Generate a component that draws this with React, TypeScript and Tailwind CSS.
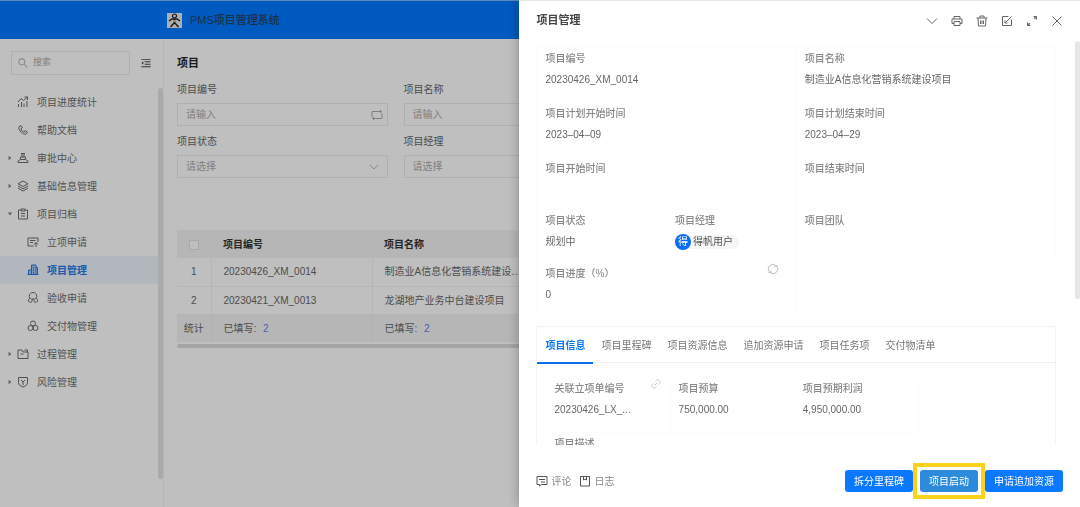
import type { ReactNode } from "react";
import { AiOutlineMenuFold, AiOutlinePhone, AiOutlineSearch } from "react-icons/ai";

const shapes: Record<string, ReactNode> = {
  chart: <path d="M3 22v-6M9 22V12M14 22v-7M20 22V10M2 12l6-7 5 4 8-7M15 2h6v6" />,
  flask: <path d="M8 3h8M10 3v7M14 3v7M7 10h10v5H7zM7 15l-5 3v3h20v-3l-5-3" />,
  layers: <path d="m12 2 10 5.500L12 13 2 7.500zM2 12l10 5.500L22 12M2 16.500 12 22l10-5.500" />,
  clipboard: <path d="M8 4H3v18h18V4h-5M8 2h8v4H8zM8 11h8M8 16h8" />,
  form: <path d="M13 20H2V4h20v8M6 9h11M6 13h6M18 13v9M14 17l4-4 4 4" />,
  building: (
    <>
      <path d="M3 12h6v9H3zM9 2h9v19H9z" fill="currentColor" fillOpacity="0.35" />
      <path d="M1 21h22M18 7h3v14M13 6v3M13 11v3M13 16v3" />
    </>
  ),
  badge: <path d="M7 14a7.500 7.500 0 1 1 10 0M8 13a4 4 0 1 0 2 6v-6M16 13a4 4 0 1 1-2 6v-6M10 14h4" />,
  circles: (
    <>
      <circle cx="12" cy="7" r="5" />
      <circle cx="7" cy="16" r="5" />
      <circle cx="17" cy="16" r="5" />
    </>
  ),
  folder: <path d="M2 4h8l2 4h10v13H2zM7 12h6M15 4h6v4" />,
  shield: <path d="M3 3h18v10c0 5-4 7-9 9-5-2-9-4-9-9zM8 8l4 4 4-4M12 12v6" />,
  loop: <path d="M2 16V5h19M22 8v11H3M18 2l3 3-3 3M6 22l-3-3 3-3" />,
  down: <path d="m2 7 10 10L22 7" />,
  close: <path d="m3 3 18 18M21 3 3 21" />,
  print: <path d="M6 8V3h12v5M6 17H2V8h20v9h-4M6 13h12v8H6z" />,
  trash: <path d="M1 6h22M8 6V2h8v4M4 6l1 16h14l1-16M9 11v7M12 11v7M15 11v7" />,
  edit: <path d="M15 3H3v18h18V9M21 3 9 15M8 11v5h5" />,
  expand: <path d="M15 3h6v6M21 3l-5 5M17 5h2v2M9 21H3v-6M3 21l5-5M5 17v2h2" />,
  refresh: <path d="M5 18A9 9 0 0 1 16 4M19 6a9 9 0 0 1-11 14M3 19h5v-4M21 5h-5v4" />,
  link: <path d="m9 15 6-6M11 7l3-3a4.500 4.500 0 0 1 6 6l-3 3M13 17l-3 3a4.500 4.500 0 0 1-6-6l3-3" />,
  comment: <path d="M2 3h20v16H11l-4 3v-3H2zM6 9h12M10 14h8" />,
  log: <path d="M3 3h18v19H3zM9 3v7l3-2 3 2V3" />,
};

function Icon({ name, className = "size-3" }: { name: string; className?: string }) {
  return (
    <svg
      viewBox="0 0 24 24"
      fill="none"
      stroke="currentColor"
      strokeWidth="2"
      className={`shrink-0 ${className}`}
      aria-hidden="true"
    >
      {shapes[name]}
    </svg>
  );
}

const MENU = [
  { label: "项目进度统计", icon: <Icon name="chart" /> },
  { label: "帮助文档", icon: <AiOutlinePhone className="size-3 -scale-x-100" /> },
  { label: "审批中心", icon: <Icon name="flask" />, arrow: "right" },
  { label: "基础信息管理", icon: <Icon name="layers" />, arrow: "right" },
  { label: "项目归档", icon: <Icon name="clipboard" />, arrow: "down" },
  { label: "立项申请", icon: <Icon name="form" />, child: true },
  { label: "项目管理", icon: <Icon name="building" />, child: true, active: true },
  { label: "验收申请", icon: <Icon name="badge" />, child: true },
  { label: "交付物管理", icon: <Icon name="circles" />, child: true },
  { label: "过程管理", icon: <Icon name="folder" />, arrow: "right" },
  { label: "风险管理", icon: <Icon name="shield" />, arrow: "right" },
];

const ROWS = [
  { code: "20230426_XM_0014", name: "制造业A信息化营销系统建设项目" },
  { code: "20230421_XM_0013", name: "龙湖地产业务中台建设项目" },
];

const TABS = ["项目信息", "项目里程碑", "项目资源信息", "追加资源申请", "项目任务项", "交付物清单"];

function Sidebar() {
  return (
    <aside className="flex w-[164px] shrink-0 flex-col border-r border-[#f4f4f4] pt-3">
      <div className="flex items-center justify-between px-[11px]">
        <label className="flex h-6 w-[119px] items-center gap-1 border border-[#ebebeb] px-[5px] text-[#aaa]">
          <AiOutlineSearch className="size-3 shrink-0" />
          <input
            aria-label="搜索"
            placeholder="搜索"
            className="w-full min-w-0 text-[9px] outline-none placeholder:text-[#aaa]"
          />
        </label>
        <button type="button" aria-label="收起菜单" className="text-[#444]">
          <AiOutlineMenuFold className="size-3" />
        </button>
      </div>
      <div className="mt-[13px] flex min-h-0 flex-1">
        <nav className="min-w-0 flex-1">
          {MENU.map((item) => (
            <a
              key={item.label}
              href="#"
              className={`flex h-7 items-center ${item.child ? "pl-[27px]" : "pl-[7px]"} ${
                item.active ? "bg-[#edf4fd] font-bold text-[#2477e8]" : "text-[#6c6c6c]"
              }`}
            >
              {!item.child && (
                <span className="flex w-[10px]">
                  {item.arrow && (
                    <svg viewBox="0 0 8 8" className="size-[6px] fill-[#888]" aria-hidden="true">
                      <path d={item.arrow === "right" ? "M2 1v6l4-3z" : "M1 2h6L4 6z"} />
                    </svg>
                  )}
                </span>
              )}
              {item.icon}
              <span className="ml-2">{item.label}</span>
            </a>
          ))}
        </nav>
        <div className="mb-7 w-[5px] rounded-full bg-[#e3e3e3]" />
      </div>
    </aside>
  );
}

function Filter({ id, label, select, icon }: { id: string; label: string; select?: boolean; icon?: ReactNode }) {
  return (
    <div>
      <label htmlFor={id} className="block h-4 leading-4 text-[#666]">
        {label}
      </label>
      <div className="mt-[5px] flex h-[23px] items-center border border-[#ebebeb] pr-1 pl-2 text-[#aaa]">
        {select ? (
          <select id={id} className="w-full min-w-0 appearance-none outline-none">
            <option>请选择</option>
          </select>
        ) : (
          <input
            id={id}
            placeholder="请输入"
            className="w-full min-w-0 outline-none placeholder:text-[#aaa]"
          />
        )}
        {icon}
      </div>
    </div>
  );
}

function ProjectList() {
  return (
    <main className="min-w-0 flex-1 px-[13px] pt-4">
      <h2 className="text-[11px] leading-4 font-bold text-[#222]">项目</h2>
      <div className="mt-[11px] grid grid-cols-4 gap-x-4 gap-y-2">
        <Filter id="code" label="项目编号" icon={<Icon name="loop" />} />
        <Filter id="name" label="项目名称" />
        <div className="col-span-2" />
        <Filter id="status" label="项目状态" select icon={<Icon name="down" className="mr-1 size-[10px]" />} />
        <Filter id="manager" label="项目经理" select />
      </div>
      <table className="mt-[52px] w-full table-fixed text-left text-[#666]">
        <thead>
          <tr className="h-7 bg-[#f3f3f3] text-[#333]">
            <th className="w-[34px] text-center">
              <input
                type="checkbox"
                aria-label="全选"
                className="size-[10px] appearance-none border border-[#e2e2e2] bg-white align-middle"
              />
            </th>
            <th className="w-[161px] px-3">项目编号</th>
            <th className="w-[161px] px-3">项目名称</th>
            <th />
          </tr>
        </thead>
        <tbody>
          {ROWS.map((row, i) => (
            <tr key={row.code} className="h-7 border-b border-[#f2f2f2]">
              <td className="border-r border-[#f2f2f2] text-center">{i + 1}</td>
              <td className="border-r border-[#f2f2f2] px-3">{row.code}</td>
              <td className="truncate pr-2 pl-3">{row.name}</td>
              <td />
            </tr>
          ))}
        </tbody>
        <tfoot>
          <tr className="h-7 bg-[#f3f3f3]">
            <td className="border-r border-[#eee] text-center">统计</td>
            <td className="border-r border-[#eee] px-3">
              已填写: <span className="ml-1 text-[#5b83ee]">2</span>
            </td>
            <td className="px-3">
              已填写: <span className="ml-1 text-[#5b83ee]">2</span>
            </td>
            <td />
          </tr>
        </tfoot>
      </table>
      <div className="mt-[2px] h-1 rounded-full bg-[#dcdcdc]" />
    </main>
  );
}

function Field({
  label,
  children,
  className = "",
  icon,
}: {
  label: string;
  children?: ReactNode;
  className?: string;
  icon?: ReactNode;
}) {
  return (
    <div className={`flex justify-between border-r border-b border-[#fcfcfc] px-2 pt-[3px] ${className}`}>
      <dl className="min-w-0">
        <dt className="h-4 leading-4 font-medium text-[#888]">{label}</dt>
        <dd className="mt-[5px] h-4 truncate leading-4 text-[#666]">{children}</dd>
      </dl>
      {icon}
    </div>
  );
}

function Drawer() {
  return (
    <section className="fixed inset-y-0 right-0 flex w-[51.9%] flex-col bg-white shadow-[0_0_12px_rgba(0,0,0,0.3)]">
      <header className="flex h-10 shrink-0 items-center justify-between border-t border-[#e8e8e8] px-[17px]">
        <h1 className="text-[11px] font-bold text-[#444]">项目管理</h1>
        <div className="flex items-center gap-[13px] text-[#666]">
          <button type="button" aria-label="下一条">
            <Icon name="down" />
          </button>
          <button type="button" aria-label="打印">
            <Icon name="print" />
          </button>
          <button type="button" aria-label="删除">
            <Icon name="trash" />
          </button>
          <button type="button" aria-label="编辑">
            <Icon name="edit" />
          </button>
          <button type="button" aria-label="全屏">
            <Icon name="expand" />
          </button>
          <button type="button" aria-label="关闭">
            <Icon name="close" />
          </button>
        </div>
      </header>

      <div className="flex min-h-0 flex-1">
        <div className="min-w-0 flex-1 overflow-hidden pt-[7px] pr-[19px] pl-[17px]">
          <div className="grid grid-cols-4 grid-rows-[55px_55px_52px_53px_55px] border-t border-l border-[#fcfcfc]">
            <Field label="项目编号" className="col-span-2">20230426_XM_0014</Field>
            <Field label="项目名称" className="col-span-2">制造业A信息化营销系统建设项目</Field>
            <Field label="项目计划开始时间" className="col-span-2">2023–04–09</Field>
            <Field label="项目计划结束时间" className="col-span-2">2023–04–29</Field>
            <Field label="项目开始时间" className="col-span-2" />
            <Field label="项目结束时间" className="col-span-2" />
            <Field label="项目状态">规划中</Field>
            <Field label="项目经理">
              <span className="flex items-center">
                <span className="z-10 flex size-4 items-center justify-center rounded-full bg-[#0a6cf0] text-white">
                  得
                </span>
                <span className="-ml-2 rounded-full bg-[#f5f5f5] pr-[6px] pl-[10px] leading-[14px] text-[#555]">
                  得帆用户
                </span>
              </span>
            </Field>
            <Field label="项目团队" className="col-span-2" />
            <Field
              label="项目进度（%）"
              className="col-span-2"
              icon={<Icon name="refresh" className="-mt-[3px] mr-[9px] size-3 text-[#bbb]" />}
            >
              0
            </Field>
          </div>

          <div className="mt-2 h-[160px] border border-[#f5f5f5]">
            <div role="tablist" className="flex h-9 border-b border-[#f0f0f0]">
              {TABS.map((tab, i) => (
                <button
                  key={tab}
                  type="button"
                  role="tab"
                  aria-selected={i === 0}
                  className={`h-[37px] border-b-2 px-2 pt-[2px] ${
                    i === 0 ? "border-[#0a70e8] font-bold text-[#0a78f5]" : "border-transparent text-[#777]"
                  }`}
                >
                  {tab}
                </button>
              ))}
            </div>
            <div className="grid grid-cols-4 grid-rows-[55px_55px] pt-[15px] pr-3 pl-[9px]">
              <Field label="关联立项单编号" icon={<Icon name="link" className="-mt-[3px] size-3 text-[#ccc]" />}>
                20230426_LX_...
              </Field>
              <Field label="项目预算">750,000.00</Field>
              <Field label="项目预期利润">4,950,000.00</Field>
              <div />
              <Field label="项目描述" className="col-span-4" />
            </div>
          </div>
        </div>
        <div className="mt-px h-[258px] w-[5px] rounded-full bg-[#e6e6e6]" />
      </div>

      <footer className="flex h-[62px] shrink-0 items-center justify-between px-[17px] pt-[10px]">
        <div className="flex gap-2 text-[#888]">
          <button type="button" className="flex items-center gap-[3px]">
            <Icon name="comment" className="size-3 text-[#555]" />
            评论
          </button>
          <button type="button" className="flex items-center gap-[3px]">
            <Icon name="log" className="size-3 text-[#555]" />
            日志
          </button>
        </div>
        <div className="flex gap-[7px] text-white">
          <button type="button" className="h-[22px] rounded-[3px] bg-[#0a78ff] px-[9px]">
            拆分里程碑
          </button>
          <div className="relative">
            <button type="button" className="h-[22px] rounded-[3px] bg-[#2d8bdc] px-[9px]">
              项目启动
            </button>
            <span className="pointer-events-none absolute -inset-[7px] border-4 border-[#fcd31a]" />
          </div>
          <button type="button" className="h-[22px] rounded-[3px] bg-[#0a78ff] px-[9px]">
            申请追加资源
          </button>
        </div>
      </footer>
    </section>
  );
}

export default function App() {
  return (
    <div className="flex h-screen flex-col overflow-hidden bg-white font-['Liberation_Sans','Noto_Sans_CJK_SC',sans-serif] text-[10px]">
      <header className="flex h-[39px] shrink-0 items-center border-t border-[#7ab8ff] bg-[#0078ff] pl-[167px]">
        <svg viewBox="0 0 15 15" className="size-[15px]" fill="none" stroke="#222" aria-hidden="true">
          <path d="M0 0h15v15H0z" fill="#e4ebf2" stroke="none" />
          <circle cx="7.500" cy="3" r="2" strokeWidth="1.200" />
          <path d="M2 8 5 6h5l3 2M7.500 6v4M7.500 9.500 3.500 14M7.500 9.500l4 4.500" strokeWidth="1.400" />
          <path d="M7.500 7v2" stroke="#f0a030" />
        </svg>
        <span className="ml-2 text-[11px] font-medium text-[#26435f]">PMS项目管理系统</span>
      </header>
      <div className="flex min-h-0 flex-1">
        <Sidebar />
        <ProjectList />
      </div>
      <div className="fixed inset-0 bg-black/25" />
      <Drawer />
    </div>
  );
}
